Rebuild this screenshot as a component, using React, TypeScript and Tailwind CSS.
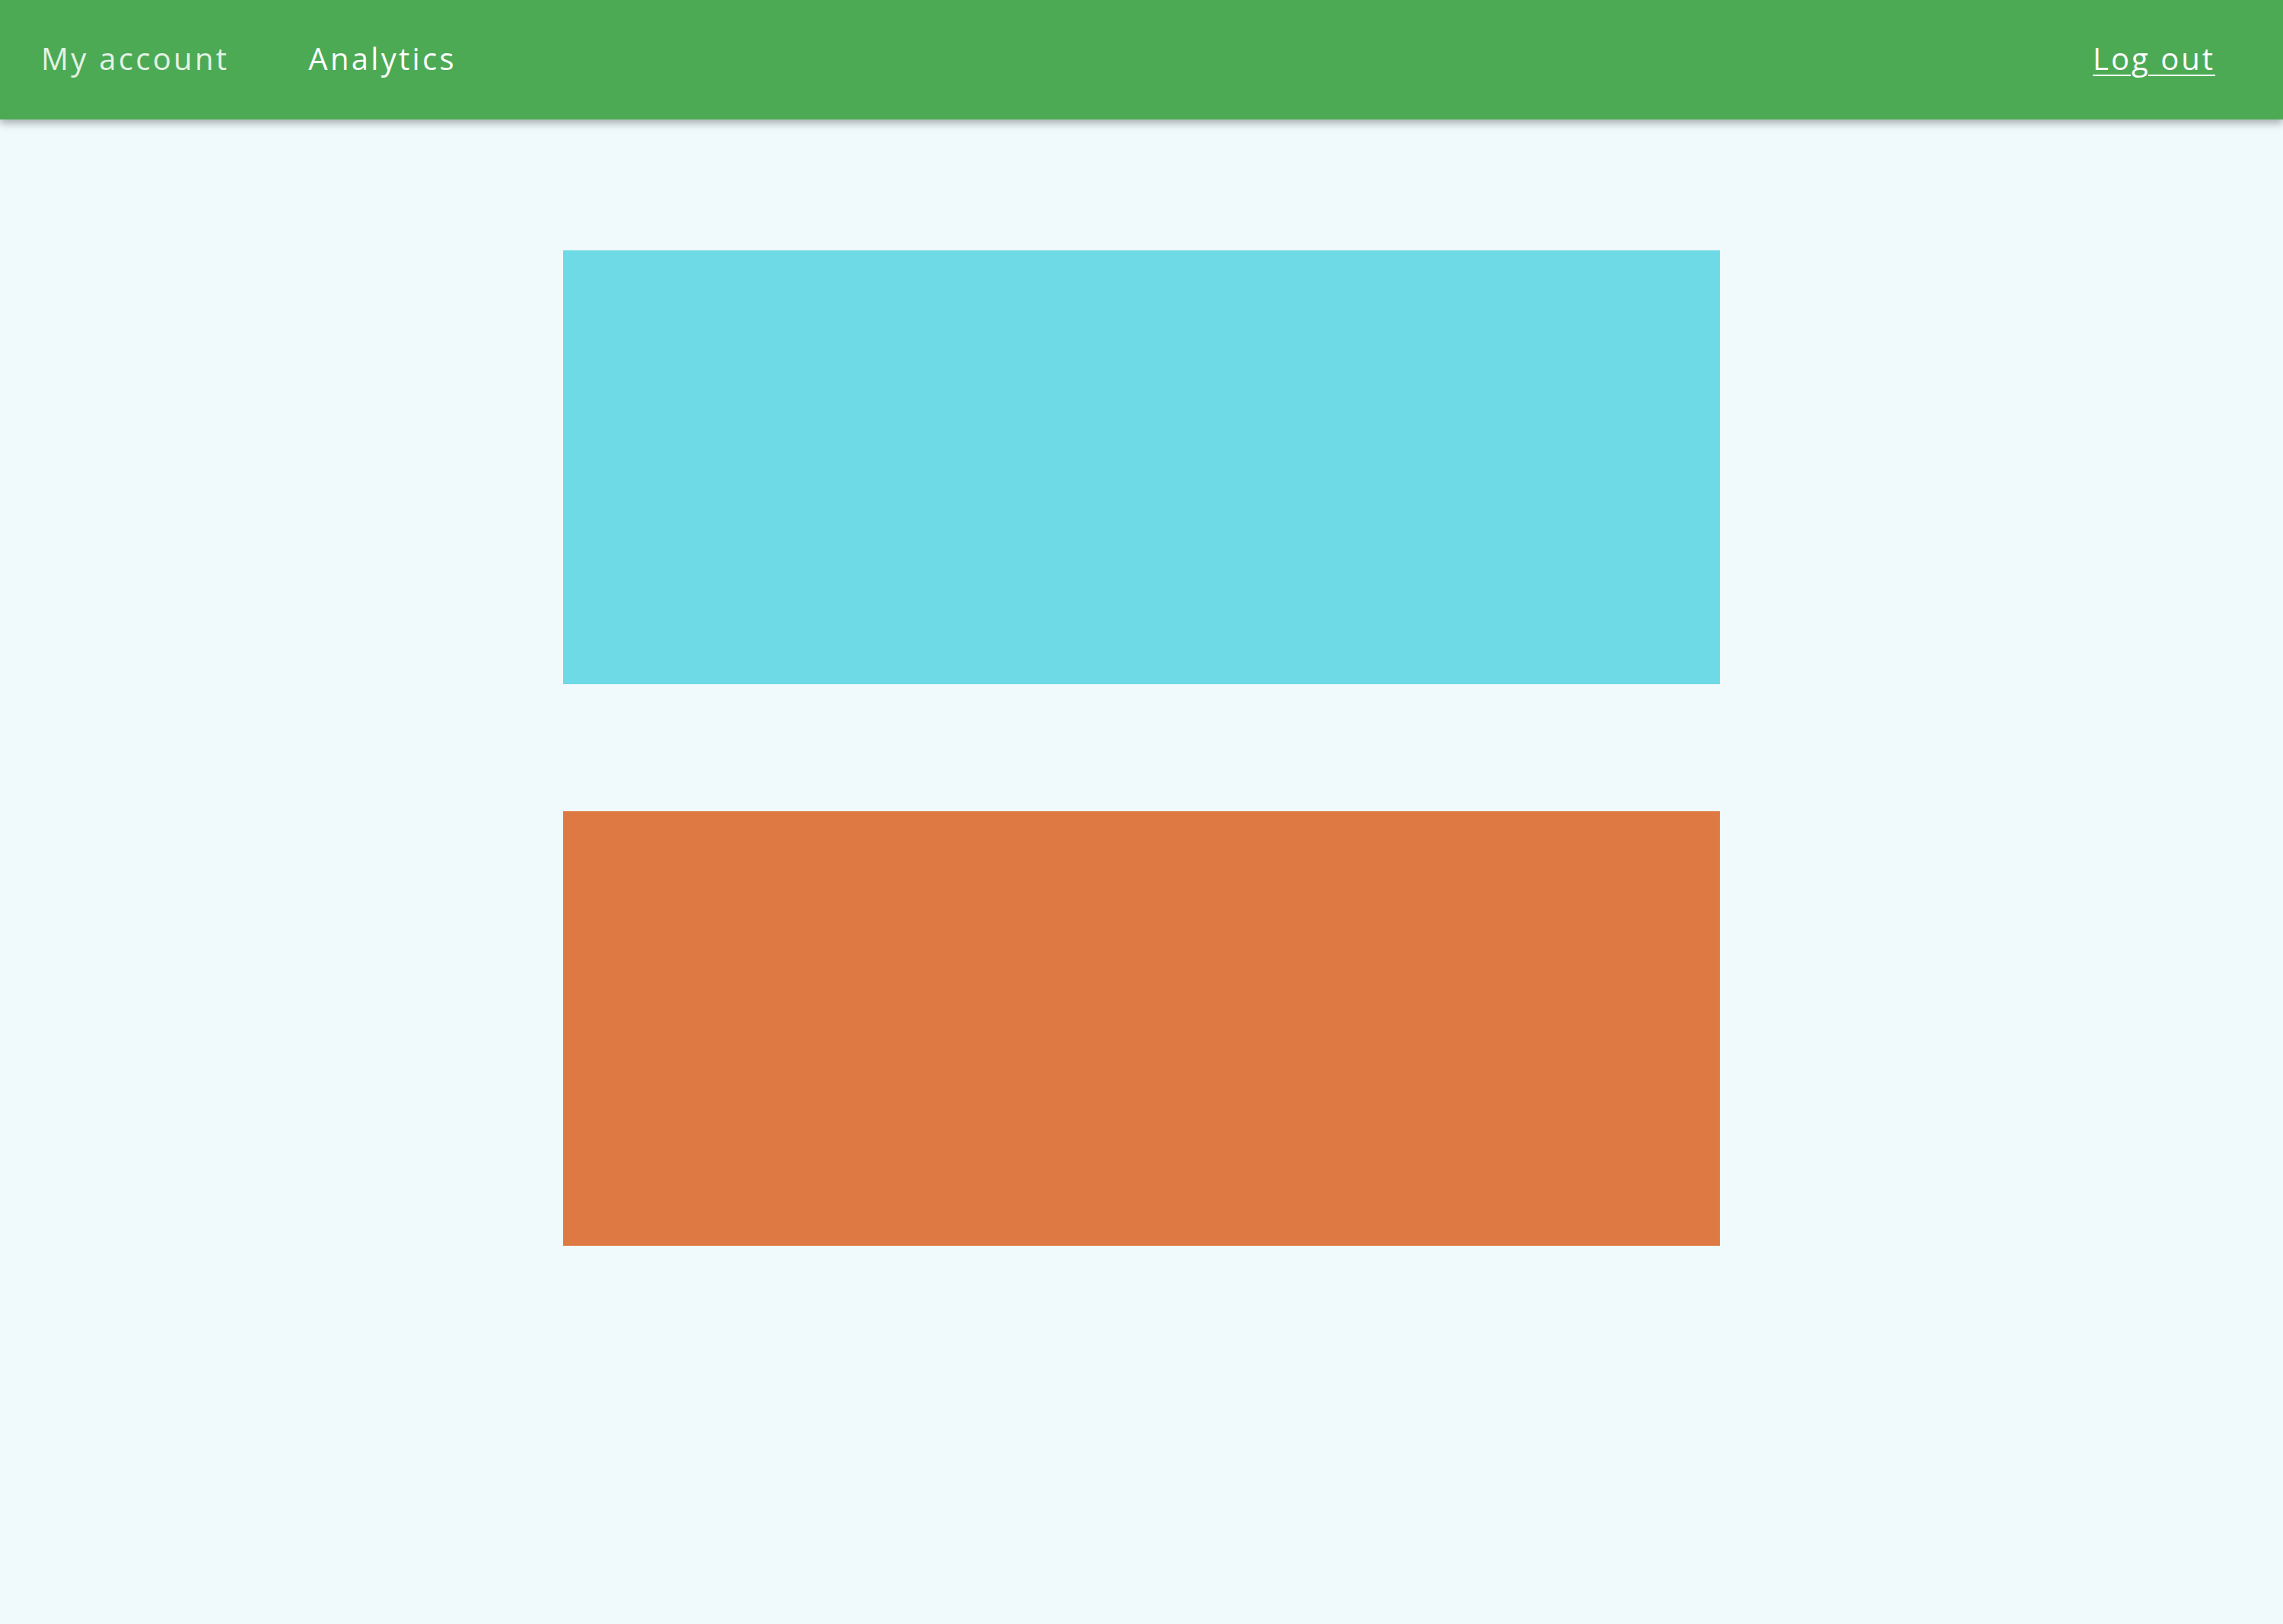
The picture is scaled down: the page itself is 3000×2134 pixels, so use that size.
export default function App() {
  return (
    <div className="min-h-screen bg-[#f0f9fb] font-['Open_Sans',sans-serif]">
      <header
        className="
          relative z-10 flex h-[157px] items-center justify-between
          bg-[#4caa54] pl-[54px] pr-[89px]
          shadow-[0_5px_10px_rgba(0,0,0,0.3)]
        "
      >
        <nav className="flex items-center gap-[104px] pb-[4px] text-[40px] tracking-[3.3px]">
          <a href="#" className="text-white/85">My account</a>
          <a href="#" className="text-white">Analytics</a>
        </nav>
        <a href="#" className="pb-[4px] text-[40px] tracking-[3px] text-white underline underline-offset-[6px] decoration-2">
          Log out
        </a>
      </header>

      <main className="flex flex-col items-center gap-[167px] pt-[172px]">
        <div className="h-[570px] w-[1520px] bg-[#6ddae6]" />
        <div className="h-[571px] w-[1520px] bg-[#df7943]" />
      </main>
    </div>
  );
}
